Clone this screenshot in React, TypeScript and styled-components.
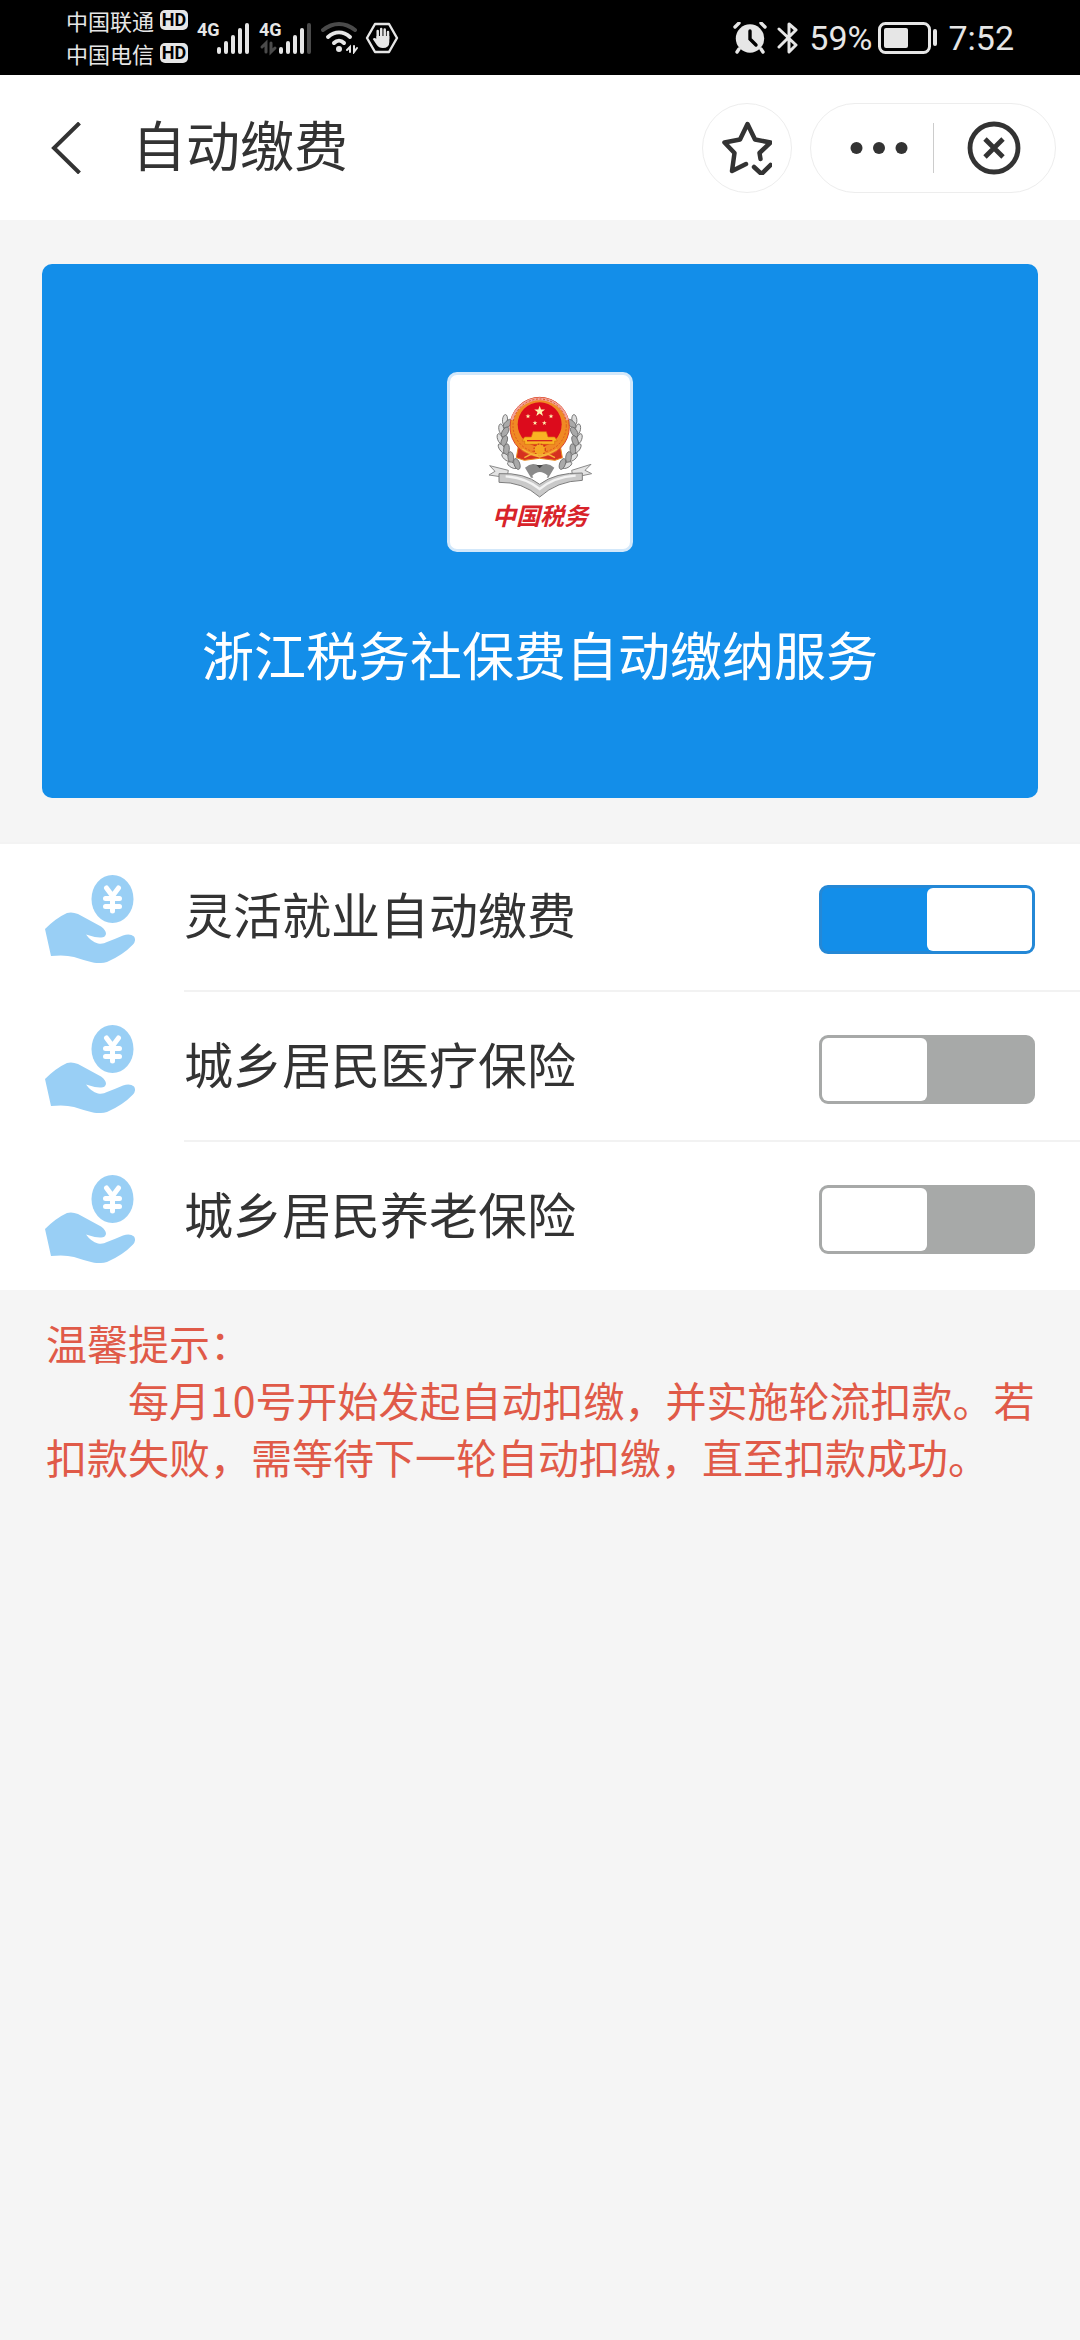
import React, { useState } from 'react';
import styled, { createGlobalStyle } from 'styled-components';

const BLUE = '#138ee9';
const INK = '#333333';

const GlobalStyle = createGlobalStyle`
  html, body { margin: 0; background: #f5f5f5; }
  *, *::before, *::after { box-sizing: border-box; }
  body, button, input {
    font-family: 'Noto Sans CJK SC', 'Noto Sans', sans-serif;
  }
  svg { display: block; flex: none; }
`;

const Page = styled.div`
  min-height: 100vh;
  background: #f5f5f5;
  color: ${INK};
`;

/* ---------- status bar ---------- */

const StatusBar = styled.div`
  display: flex;
  align-items: center;
  justify-content: space-between;
  height: 75px;
  padding: 0 66px;
  background: #000;
  color: #e6e6e6;
`;

const StatusGroup = styled.div<{ $gap: number }>`
  display: flex;
  align-items: center;
  gap: ${(p) => p.$gap}px;
`;

const Carriers = styled.div`
  display: flex;
  flex-direction: column;
  padding-bottom: 2px;
`;

const Carrier = styled.div`
  display: flex;
  align-items: center;
  gap: 6px;
  font-size: 22px;
  line-height: 33px;
`;

const HdBadge = styled.span`
  width: 28px;
  height: 20px;
  border-radius: 5px;
  background: #e6e6e6;
  color: #000;
  font: 700 18px/20px Roboto, sans-serif;
  text-align: center;
`;

const Signal = styled.div`
  display: flex;
  align-items: flex-start;
  height: 32px;
`;

const NetType = styled.span`
  width: 19px;
  font: 700 18px/16px 'Liberation Sans Narrow', Roboto, sans-serif;
`;

const StatusText = styled.span`
  font: 400 34px/40px Roboto, sans-serif;
`;

const SignalMeter = ({ weak = false }: { weak?: boolean }) => (
  <Signal>
    <NetType>4G</NetType>
    <svg width="34" height="32" viewBox="0 0 34 32" stroke="#e6e6e6" strokeWidth="4" strokeLinecap="round" overflow="visible">
      <path d="M3 27v3M10 21v9M17 15v15M24 8v22" />
      <path d="M31 3v27" stroke={weak ? '#4a4a4a' : '#e6e6e6'} />
      {weak && (
        <path d="M-16 25l4-4v9M-7 21v9l4-4" stroke="#4a4a4a" strokeWidth="3" fill="none" />
      )}
    </svg>
  </Signal>
);

const WifiIcon = () => (
  <svg width="38" height="32" viewBox="0 0 38 32" fill="none" strokeWidth="4" strokeLinecap="round">
    <path d="M2 8C12 0 24 0 34 8" stroke="#4a4a4a" />
    <path d="M7 15C14 9 22 9 29 15" stroke="#e6e6e6" />
    <path d="M13 21C16 18 20 18 23 21" stroke="#e6e6e6" />
    <circle cx="18" cy="27" r="3" fill="#e6e6e6" />
    <path d="M26 28l3-3v5M33 24v6l3-4" stroke="#e6e6e6" strokeWidth="2" />
  </svg>
);

const PalmIcon = () => (
  <svg width="34" height="32" viewBox="0 0 34 32" fill="none" stroke="#e6e6e6">
    <path d="M10 2h14l8 14-8 14H10L2 16z" strokeWidth="2.4" strokeLinejoin="round" />
    <path d="M12.7 17V9M16.2 16V7M19.7 16V7.500M23 17v-7" strokeWidth="2.500" strokeLinecap="round" />
    <path d="M11.500 14h12.800v6q0 6-6.500 6-4 0-6-3l-4-6q1.500-2 3.700 0z" fill="#e6e6e6" stroke="none" />
  </svg>
);

const AlarmIcon = () => (
  <svg width="34" height="32" viewBox="0 0 34 32" fill="none" strokeLinecap="round">
    <circle cx="17" cy="16.500" r="14.200" fill="#e6e6e6" />
    <path d="M2 5l4-4M32 5l-4-4M6 27l-2 3M28 27l2 3" stroke="#e6e6e6" strokeWidth="3.400" />
    <path d="M17 9v8l6 6" stroke="#000" strokeWidth="3.400" />
  </svg>
);

const BluetoothIcon = () => (
  <svg width="22" height="34" viewBox="0 0 22 34" fill="none" stroke="#e6e6e6" strokeWidth="3" strokeLinejoin="round" strokeLinecap="round">
    <path d="M2 8l17 16-7 7V3l7 6L2 26" />
  </svg>
);

const BatteryIcon = () => (
  <svg width="60" height="32" viewBox="0 0 60 32" fill="none">
    <rect x="1.500" y="1.500" width="50" height="29" rx="6" stroke="#e6e6e6" strokeWidth="3" />
    <rect x="6" y="6" width="24" height="20" rx="2" fill="#e6e6e6" />
    <rect x="55" y="7" width="4" height="17" rx="2" fill="#e6e6e6" />
  </svg>
);

/* ---------- title bar ---------- */

const Header = styled.header`
  display: flex;
  align-items: center;
  height: 145px;
  padding: 0 24px 0 42px;
  background: #fff;
`;

const IconButton = styled.button`
  display: flex;
  align-items: center;
  justify-content: center;
  padding: 0;
  border: 0;
  background: transparent;
  color: ${INK};
`;

const BackButton = styled(IconButton)`
  width: 48px;
  height: 90px;
`;

const Title = styled.h1`
  flex: 1;
  margin: 0 0 0 42px;
  padding-bottom: 8px;
  font-size: 54px;
  line-height: 80px;
  font-weight: 400;
`;

const RoundButton = styled(IconButton)`
  width: 90px;
  height: 90px;
  margin-right: 18px;
  border: 1px solid #ededed;
  border-radius: 45px;
`;

const Capsule = styled.div`
  display: grid;
  grid-template-columns: 1fr 1px 1fr;
  align-items: center;
  width: 246px;
  height: 90px;
  border: 1px solid #ededed;
  border-radius: 45px;
`;

const CapsuleButton = styled(IconButton)`
  height: 88px;

  &:first-child {
    padding-left: 14px;
  }
`;

const CapsuleLine = styled.span`
  height: 50px;
  background: #cccccc;
`;

const BackIcon = () => (
  <svg width="30" height="52" viewBox="0 0 30 52" fill="none" stroke="currentColor" strokeWidth="4">
    <path d="M28.500 1L3 26l25.500 25" />
  </svg>
);

const StarIcon = () => (
  <svg width="50" height="54" viewBox="0 0 50 54" fill="none" stroke="currentColor" strokeWidth="4.500" strokeLinecap="round" strokeLinejoin="round">
    <path d="M24 43L10 50l2.500-18L2.500 21.500l15.500-3L25.500 3l7.500 15.500 15.500 3L37.500 32l1 6" />
    <path d="M32 46l7.500 7L48.500 44" />
  </svg>
);

const MoreIcon = () => (
  <svg width="58" height="14" viewBox="0 0 58 14" fill="currentColor">
    <circle cx="6.500" cy="7" r="6" />
    <circle cx="29" cy="7" r="6" />
    <circle cx="51.500" cy="7" r="6" />
  </svg>
);

const CloseIcon = () => (
  <svg width="54" height="54" viewBox="0 0 54 54" fill="none" stroke="currentColor" strokeWidth="4.800">
    <circle cx="27" cy="27" r="24" />
    <path d="M18 18l18 18M36 18L18 36" />
  </svg>
);

/* ---------- banner ---------- */

const Banner = styled.section`
  display: flex;
  flex-direction: column;
  align-items: center;
  margin: 44px 42px;
  padding-top: 108px;
  height: 534px;
  border-radius: 10px;
  background: ${BLUE};
  color: #fff;
`;

const LogoCard = styled.div`
  display: flex;
  flex: none;
  flex-direction: column;
  align-items: center;
  width: 186px;
  height: 180px;
  padding-top: 20px;
  border: 3px solid #d3e8fa;
  border-radius: 10px;
  background: #fff;
`;

const LogoName = styled.span`
  color: #d8232a;
  font-size: 24px;
  line-height: 34px;
  font-weight: 700;
  font-style: italic;
`;

const BannerTitle = styled.h2`
  margin: 64px 0 0;
  font-size: 52px;
  line-height: 76px;
  font-weight: 400;
`;

const leaves = [
  [228, 205, 25], [217, 232, 10], [213, 260, 0], [218, 288, -15], [230, 314, -28], [248, 337, -42],
];

const Wheat = () => (
  <g stroke="#6a6a6a" strokeWidth="2.500">
    {leaves.map(([x, y, r]) => (
      <g key={y} transform={`translate(${x} ${y}) rotate(${r})`}>
        <ellipse cx="-4" cy="0" rx="7.500" ry="16" fill="#dedede" transform="rotate(-20)" />
        <ellipse cx="11" cy="4" rx="8.500" ry="17" fill="#a9a9a9" transform="rotate(22)" />
      </g>
    ))}
  </g>
);

const star = 'M0-10L2.400-3.200 9.500-3.100 3.800 1.200 5.900 8.100 0 4 -5.900 8.100 -3.800 1.200 -9.500-3.100 -2.400-3.200z';

const Emblem = () => (
  <svg width="106" height="103" viewBox="170 130 318 309" role="img" aria-label="税徽">
    <Wheat />
    <g transform="matrix(-1 0 0 1 656 0)"><Wheat /></g>
    <path d="M284 348q22-20 44-4 22-16 44 4l-18 30h-52z" fill="#8a8a8a" />
    <path d="M306 372q22-22 46 0l-8 18h-30z" fill="#fff" />
    <path d="M178 342l56 14-4 22-54-8 18-11zM482 338l-58 18 4 22 56-12-20-10z" fill="#e3e3e3" stroke="#8c8c8c" strokeWidth="3" />
    <path d="M206 366q76-4 122 32 46-36 128-34v22q-76 2-128 50-52-46-122-44z" fill="#c9c9c9" stroke="#7d7d7d" strokeWidth="3" />
    <path d="M226 374q60 4 102 38 44-36 108-40" fill="none" stroke="#f3f3f3" strokeWidth="7" />
    <path d="M264 284l-6 34 24 8 46-6 46 6 22-8-6-34z" fill="#d6301f" stroke="#e98a1c" strokeWidth="3" />
    <circle cx="328" cy="226" r="89" fill="#f08a24" stroke="#d9432a" strokeWidth="3" />
    <path d="M245 205a86 86 0 0 1 166 0" fill="none" stroke="#f3a29a" strokeWidth="8" />
    <circle cx="328" cy="222" r="80" fill="none" stroke="#e0561f" strokeWidth="3" strokeDasharray="6 5" />
    <circle cx="328" cy="218" r="66" fill="#dc0b1c" />
    <g fill="#fff3b0">
      <path d={star} transform="translate(328 179) scale(1.700)" />
      <path d={star} transform="translate(293 194) scale(.75)" />
      <path d={star} transform="translate(362 194) scale(.75)" />
      <path d={star} transform="translate(314 214) scale(.75)" />
      <path d={star} transform="translate(342 214) scale(.75)" />
    </g>
    <path d="M308 240h40l5 16h20l8 12h-8v10h-90v-10h-8l8-12h20z" fill="#f9b323" stroke="#d97012" strokeWidth="2" />
    <path d="M290 267h76" stroke="#d2241b" strokeWidth="4" />
    <circle cx="328" cy="294" r="17" fill="#f5a623" stroke="#d3421b" strokeWidth="4" strokeDasharray="5 4" />
    <path d="M276 292q52 36 104 0M282 318l20-10 26 8 26-8 20 10" fill="none" stroke="#f6b53a" strokeWidth="4" />
    <path d="M318 340l10 10 10-10z" fill="#444" />
  </svg>
);

/* ---------- settings list ---------- */

const List = styled.div`
  display: flex;
  flex-direction: column;
  background: #fff;
  box-shadow: inset 0 2px 0 #f3f3f3;
`;

const Row = styled.label`
  display: flex;
  align-items: center;
  height: 148px;
  padding: 6px 45px 0;
`;

const Divider = styled.div`
  height: 2px;
  margin-left: 184px;
  background: #f2f2f2;
`;

const RowText = styled.span`
  flex: 1;
  margin-left: 49px;
  padding-bottom: 12px;
  font-size: 49px;
  line-height: 72px;
`;

const Switch = styled.input`
  appearance: none;
  display: flex;
  flex: none;
  justify-content: flex-start;
  width: 216px;
  height: 69px;
  margin: 0;
  border: 3px solid #a7a9a8;
  border-radius: 9px;
  background: #a7a9a8;

  &::before {
    content: '';
    width: 105px;
    height: 63px;
    border-radius: 6px;
    background: #fff;
  }

  &:checked {
    justify-content: flex-end;
    border-color: #2488d6;
    background: ${BLUE};
  }
`;

const PayIcon = () => (
  <svg width="90" height="88" viewBox="0 0 90 88" fill="#99cff5">
    <ellipse cx="67.500" cy="24" rx="21" ry="24" />
    <path d="M61.500 13l6 8 6-8M60.500 23.500h14M60.500 31.500h14M67.500 22v14" fill="none" stroke="#fff" strokeWidth="5" strokeLinecap="round" />
    <path d="M0 54Q11 43 22 38q5-1.500 11 1l23 12.500q5 3.500 5 7.500-1 4-6 3.500-7-.5-14-3 5 7 12 9 5 1 9-1.500Q70 64 78 60.500q7-2.500 11 1 2.500 4-1 8Q78 80 62 87q-8 2-15 .3-8-2-18-5.300-9-2.500-23-1z" />
  </svg>
);

/* ---------- notice ---------- */

const Notice = styled.section`
  padding: 24px 40px 24px 46px;
  color: #e05a48;
  font-size: 41px;
  line-height: 57px;
`;

const NoticeLine = styled.p<{ $indent?: boolean }>`
  margin: 0;
  text-indent: ${(p) => (p.$indent ? '2em' : '0')};
`;

const items = [
  { id: 'flexible', label: '灵活就业自动缴费', on: true },
  { id: 'medical', label: '城乡居民医疗保险', on: false },
  { id: 'pension', label: '城乡居民养老保险', on: false },
];

export default function App() {
  const [enabled, setEnabled] = useState(items.map((item) => item.on));
  const toggle = (index: number) =>
    setEnabled((prev) => prev.map((value, i) => (i === index ? !value : value)));

  return (
    <Page>
      <GlobalStyle />
      <StatusBar>
        <StatusGroup $gap={9}>
          <Carriers>
            <Carrier>中国联通<HdBadge>HD</HdBadge></Carrier>
            <Carrier>中国电信<HdBadge>HD</HdBadge></Carrier>
          </Carriers>
          <SignalMeter />
          <SignalMeter weak />
          <StatusGroup $gap={6}>
            <WifiIcon />
            <PalmIcon />
          </StatusGroup>
        </StatusGroup>
        <StatusGroup $gap={10}>
          <AlarmIcon />
          <BluetoothIcon />
          <StatusGroup $gap={6}>
            <StatusText>59%</StatusText>
            <BatteryIcon />
          </StatusGroup>
          <StatusText>7:52</StatusText>
        </StatusGroup>
      </StatusBar>

      <Header>
        <BackButton type="button" aria-label="返回"><BackIcon /></BackButton>
        <Title>自动缴费</Title>
        <RoundButton type="button" aria-label="收藏"><StarIcon /></RoundButton>
        <Capsule>
          <CapsuleButton type="button" aria-label="更多"><MoreIcon /></CapsuleButton>
          <CapsuleLine />
          <CapsuleButton type="button" aria-label="关闭"><CloseIcon /></CapsuleButton>
        </Capsule>
      </Header>

      <main>
        <Banner>
          <LogoCard>
            <Emblem />
            <LogoName>中国税务</LogoName>
          </LogoCard>
          <BannerTitle>浙江税务社保费自动缴纳服务</BannerTitle>
        </Banner>

        <List>
          {items.map((item, index) => (
            <React.Fragment key={item.id}>
              {index > 0 && <Divider />}
              <Row htmlFor={item.id}>
                <PayIcon />
                <RowText>{item.label}</RowText>
                <Switch
                  id={item.id}
                  type="checkbox"
                  role="switch"
                  checked={enabled[index]}
                  onChange={() => toggle(index)}
                />
              </Row>
            </React.Fragment>
          ))}
        </List>

        <Notice>
          <NoticeLine>温馨提示：</NoticeLine>
          <NoticeLine $indent>
            每月10号开始发起自动扣缴，并实施轮流扣款。若扣款失败，需等待下一轮自动扣缴，直至扣款成功。
          </NoticeLine>
        </Notice>
      </main>
    </Page>
  );
}
